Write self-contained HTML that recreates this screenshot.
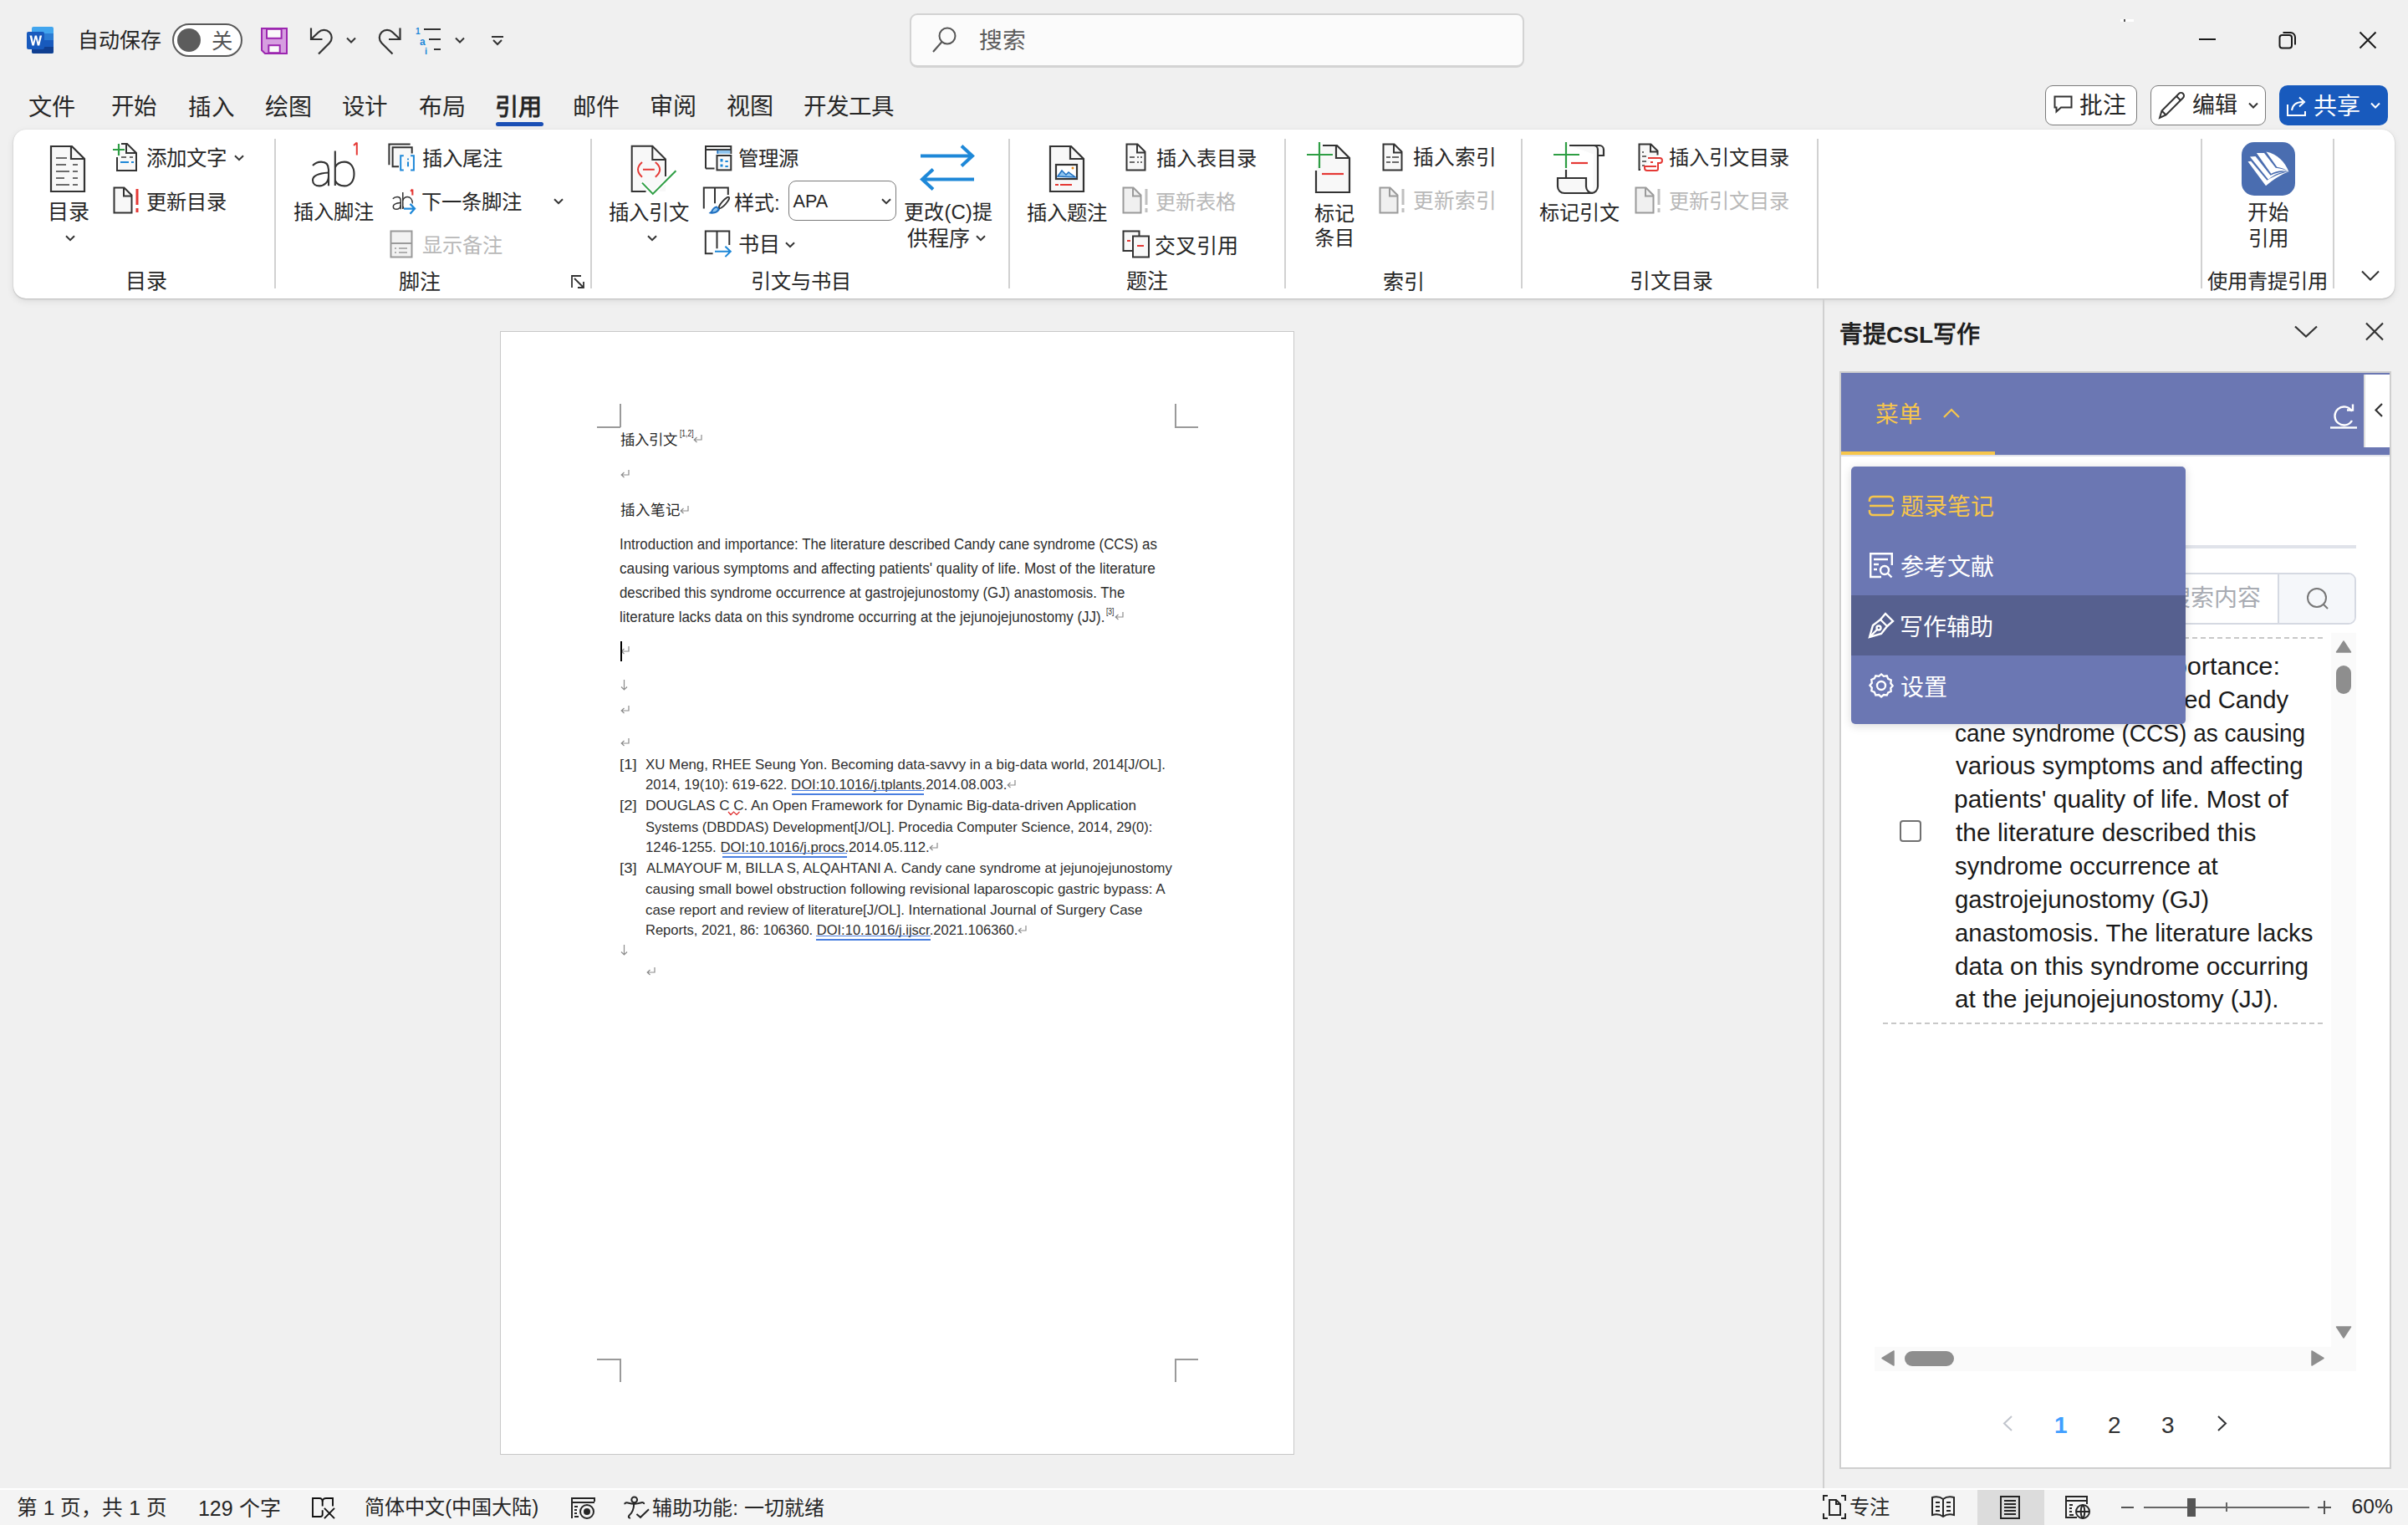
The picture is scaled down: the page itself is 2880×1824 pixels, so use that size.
<!DOCTYPE html>
<html lang="zh-CN"><head><meta charset="utf-8"><style>
*{box-sizing:border-box}
html,body{margin:0;padding:0}
body{width:2880px;height:1824px;position:relative;overflow:hidden;background:#f0f0f0;font-family:"Liberation Sans",sans-serif;color:#262626}
.t{position:absolute;white-space:nowrap;line-height:1}
.a{position:absolute}
svg.a{overflow:visible}
.ribbon{position:absolute;left:16px;top:155px;width:2848px;height:202px;background:#fff;border-radius:15px;box-shadow:0 1px 2px rgba(0,0,0,0.16),0 3px 10px rgba(0,0,0,0.09),0 0 1px rgba(0,0,0,0.12)}
.sep{position:absolute;top:166px;width:2px;height:179px;background:#d1d1d1}
.page{position:absolute;left:598px;top:396px;width:950px;height:1344px;background:#fff;border:1px solid #c8c8c8}
.dl{position:absolute;white-space:nowrap;line-height:1;font-size:18px;color:#2e2e2e;transform-origin:0 0}
.pm{color:#8a8a8a}
.pl{position:absolute;white-space:nowrap;line-height:1;font-size:30px;color:#1a1a1a;transform-origin:0 0}
</style></head><body>
<svg class="a" style="left:32px;top:32px" width="32" height="32" viewBox="0 0 32 32">
<rect x="6" y="0" width="26" height="32" rx="2" fill="#41a5ee"/>
<rect x="6" y="8" width="26" height="8" fill="#2b7cd3"/>
<rect x="6" y="16" width="26" height="8" fill="#185abd"/>
<path d="M6 24h26v6a2 2 0 0 1-2 2H8a2 2 0 0 1-2-2z" fill="#103f91"/>
<rect x="0" y="6" width="21" height="21" rx="2" fill="#185abd"/>
<path d="M3.5 10.5h2.6l1.7 8.2 1.9-8.2h2.3l1.9 8.3 1.7-8.3h2.5l-2.9 12h-2.4l-2-8.4-2 8.4H6.4z" fill="#fff"/>
</svg>
<div class="a" style="left:206px;top:28px;width:84px;height:40px;border:2px solid #5a5a5a;border-radius:20px;background:#fff"></div>
<div class="a" style="left:212px;top:34px;width:28px;height:28px;border-radius:14px;background:#5c5c5c"></div>
<svg class="a" style="left:312px;top:33px" width="32" height="32" viewBox="0 0 32 32">
<path d="M1 1h30v30H5l-4-4z" fill="#d69ee0" stroke="#9c27b0" stroke-width="2"/>
<rect x="7" y="1.8" width="17.6" height="11" fill="#fafafa" stroke="#9c27b0" stroke-width="2"/>
<rect x="9.3" y="21.2" width="13.4" height="9" fill="#fafafa" stroke="#9c27b0" stroke-width="2"/>
</svg>
<svg class="a" style="left:370px;top:32px" width="32" height="34" viewBox="0 0 32 34" fill="none" stroke="#333" stroke-width="2.2">
<path d="M2 1.5v13.5h13.5"/><path d="M2.5 14.5L11 6.5a9 9 0 0 1 13 13L11 32.5"/></svg>
<svg class="a" style="left:414px;top:44px" width="12" height="9" viewBox="0 0 12 9" fill="none" stroke="#333" stroke-width="2"><path d="M1 1.5l5 5 5-5"/></svg>
<svg class="a" style="left:449px;top:32px" width="32" height="34" viewBox="0 0 32 34" fill="none" stroke="#333" stroke-width="2.2">
<path d="M29.5 1.5v13.5H16"/><path d="M29 14.5L20.5 6.5a9 9 0 0 0-13 13L20.5 32.5"/></svg>
<svg class="a" style="left:497px;top:32px" width="32" height="34" viewBox="0 0 32 34">
<text x="0" y="9" font-size="10" font-weight="bold" fill="#1e88d8" font-family="Liberation Sans">1</text>
<text x="5" y="22" font-size="12" font-weight="bold" fill="#1e88d8" font-family="Liberation Sans">a</text>
<text x="11" y="33" font-size="11" font-weight="bold" fill="#1e88d8" font-family="Liberation Sans">i</text>
<path d="M10 3h20M16 15h14M22 27h8" stroke="#333" stroke-width="2.2"/></svg>
<svg class="a" style="left:544px;top:44px" width="12" height="9" viewBox="0 0 12 9" fill="none" stroke="#333" stroke-width="2"><path d="M1 1.5l5 5 5-5"/></svg>
<svg class="a" style="left:587px;top:42px" width="16" height="14" viewBox="0 0 16 14" fill="none" stroke="#333" stroke-width="2"><path d="M1 2h14"/><path d="M3 6l5 5 5-5"/></svg>
<div class="a" style="left:1088px;top:16px;width:735px;height:65px;border:2px solid #d3d3d3;border-bottom-width:3px;border-radius:9px;background:#fbfbfb"></div>
<svg class="a" style="left:1115px;top:32px" width="30" height="32" viewBox="0 0 30 32" fill="none" stroke="#555" stroke-width="2"><circle cx="18" cy="11" r="9.5"/><path d="M11.5 18L1 30"/></svg>
<div class="a" style="left:2536px;top:23px;width:16px;height:3px;background:#fff"></div><div class="a" style="left:2540px;top:23px;width:2px;height:3px;background:#555"></div>
<div class="a" style="left:2630px;top:46px;width:20px;height:2px;background:#1a1a1a"></div>
<svg class="a" style="left:2725px;top:37px" width="22" height="22" viewBox="0 0 22 22" fill="none" stroke="#1a1a1a" stroke-width="2">
<rect x="1.5" y="5" width="14.5" height="15.5" rx="3"/><path d="M5.5 2h9a5.5 5.5 0 0 1 5.5 5.5v9"/></svg>
<svg class="a" style="left:2821px;top:37px" width="22" height="22" viewBox="0 0 22 22" fill="none" stroke="#1a1a1a" stroke-width="2"><path d="M1.5 1.5l19 19M20.5 1.5l-19 19"/></svg>
<div class="a" style="left:593px;top:146px;width:57px;height:5px;border-radius:3px;background:#1a4fb5"></div>
<div class="a" style="left:2446px;top:102px;width:110px;height:48px;border:1.5px solid #7a7a7a;border-radius:9px;background:#fff"></div>
<svg class="a" style="left:2456px;top:114px" width="24" height="24" viewBox="0 0 24 24" fill="none" stroke="#333" stroke-width="2"><path d="M1.5 1.5h20v13H9l-5.5 5v-5h-2z"/></svg>
<div class="a" style="left:2572px;top:102px;width:138px;height:48px;border:1.5px solid #7a7a7a;border-radius:9px;background:#fff"></div>
<svg class="a" style="left:2581px;top:109px" width="34" height="34" viewBox="0 0 34 34" fill="none" stroke="#333" stroke-width="2"><path d="M2 32l2.5-8.5L25 3a3.5 3.5 0 0 1 5 5L9.5 28.5z"/><path d="M22 6l5 5M4.5 23.5l5 5"/></svg>
<svg class="a" style="left:2689px;top:122px" width="12" height="9" viewBox="0 0 12 9" fill="none" stroke="#333" stroke-width="2"><path d="M1 1.5l5 5 5-5"/></svg>
<div class="a" style="left:2726px;top:102px;width:130px;height:48px;border-radius:10px;background:#185abd"></div>
<svg class="a" style="left:2735px;top:113px" width="25" height="26" viewBox="0 0 25 26" fill="none" stroke="#fff" stroke-width="2"><path d="M1 12v13h21v-5"/><path d="M6 19c1-7 6-10 13-10"/><path d="M15 3.5l6 5.5-6 5.5"/></svg>
<svg class="a" style="left:2835px;top:122px" width="12" height="9" viewBox="0 0 12 9" fill="none" stroke="#fff" stroke-width="2"><path d="M1 1.5l5 5 5-5"/></svg>
<div class="ribbon"></div>
<div class="sep" style="left:328px"></div>
<div class="sep" style="left:706px"></div>
<div class="sep" style="left:1206px"></div>
<div class="sep" style="left:1536px"></div>
<div class="sep" style="left:1819px"></div>
<div class="sep" style="left:2173px"></div>
<div class="sep" style="left:2632px"></div>
<div class="sep" style="left:2790px"></div>
<svg class="a" style="left:59px;top:173px" width="44" height="58" viewBox="0 0 44 58" fill="none">
<path d="M2 2h25l15 15v39H2z" fill="#f8f8f8" stroke="#333" stroke-width="2.2"/><path d="M26 2v15h16" stroke="#333" stroke-width="2.2"/>
<path d="M8 16h5M12 16h4M15 16h6M8 24h12M28 24h6M8 32h16M28 32h6M8 40h10M28 40h6M8 48h16M28 48h6" stroke="#6b6b6b" stroke-width="2.2"/></svg>
<svg class="a" style="left:78px;top:281px" width="12" height="8" viewBox="0 0 12 8" fill="none" stroke="#333" stroke-width="2"><path d="M1 1.2l5 5 5-5"/></svg>
<svg class="a" style="left:135px;top:171px" width="30" height="34" viewBox="0 0 30 34" fill="none">
<path d="M10 1h7l11 11v21H5V17" fill="#f8f8f8" stroke="#333" stroke-width="2"/><path d="M16 1v11h12" stroke="#333" stroke-width="2"/>
<path d="M7 1v14M0 8h14" stroke="#2e9e44" stroke-width="2.2"/><path d="M10 17h6M20 17h4" stroke="#6b6b6b" stroke-width="2"/><path d="M9 23h10M22 23h3" stroke="#1e88d8" stroke-width="2"/></svg>
<svg class="a" style="left:280px;top:185px" width="12" height="8" viewBox="0 0 12 8" fill="none" stroke="#333" stroke-width="2"><path d="M1 1.2l5 5 5-5"/></svg>
<svg class="a" style="left:135px;top:223px" width="33" height="34" viewBox="0 0 33 34" fill="none">
<path d="M1.5 1.5h12l9 9V31.5h-21z" fill="#f8f8f8" stroke="#333" stroke-width="2"/><path d="M13 1.5v10h9.5" stroke="#333" stroke-width="2"/>
<path d="M29 3v19M29 26v5" stroke="#e53935" stroke-width="3"/></svg>
<svg class="a" style="left:368px;top:168px" width="64" height="60" viewBox="0 0 64 60" fill="none" stroke="#333" stroke-width="2.1">
<g transform="translate(0,10)"><path d="M6 20C9 16.8 12.5 15.6 16 15.6C22 15.6 25 19 25 25V44.2"/><path d="M25 28.5C17 29 6 30.5 6 37.5C6 42 9.5 44.4 14 44.4C19.5 44.4 25 40 25 33"/>
<path d="M32.8 2.5V44"/><path d="M32.8 22C35 17.5 39 15.6 44 15.6C51 15.6 55.5 21.5 55.5 30C55.5 38.5 51 44.4 44 44.4C39 44.4 35 42.5 32.8 38"/></g>
<path d="M58.8 2.5V17.5M55 6L58.8 2.5" stroke="#e53935" stroke-width="2"/></svg>
<svg class="a" style="left:464px;top:171px" width="34" height="34" viewBox="0 0 34 34" fill="none">
<rect x="5.6" y="5.3" width="23.1" height="23" fill="#f8f8f8"/>
<path d="M1.4 26.3V1.6H26.7" stroke="#333" stroke-width="2"/><path d="M13 28.3H5.6V5.3H28.7V12.6" stroke="#333" stroke-width="2"/>
<path d="M18.8 15.2H15.2V32.5H18.8M27.1 15.2H30.9V32.5H27.1M24 22.6V28.3M24 18.5V20.3" stroke="#1e88d8" stroke-width="2" fill="#fff"/></svg>
<svg class="a" style="left:466px;top:226px" width="34" height="32" viewBox="0 -2 34 34" fill="none" stroke="#333" stroke-width="1.6">
<path d="M3 10.5C4.5 8.7 6.5 8 8.5 8C11.5 8 13 10 13 13V23.7"/><path d="M13 15.5C9 15.8 3.5 16.3 3.5 20.3C3.5 22.5 5.3 23.8 7.5 23.8C10.3 23.8 13 21.7 13 18.3"/>
<path d="M15.7 2.2V23.6"/><path d="M15.7 12.5C16.7 9.5 19 8 21.5 8C25 8 27.8 11 27.8 15.8C27.8 20.5 25 23.8 21.5 23.8C19 23.8 16.7 22.5 15.7 20.5"/>
<path d="M17 23H30.5M25 17L30.8 23L25 29.5" stroke="#fff" stroke-width="5"/>
<path d="M17 23H30.5M25 17L30.8 23L25 29.5" stroke="#1e88d8" stroke-width="2.4"/>
<path d="M28 -1.5V6M25.6 0.8L28 -1.5" stroke="#e53935" stroke-width="2.2"/></svg>
<svg class="a" style="left:662px;top:237px" width="12" height="8" viewBox="0 0 12 8" fill="none" stroke="#333" stroke-width="2"><path d="M1 1.2l5 5 5-5"/></svg>
<svg class="a" style="left:466px;top:275px" width="28" height="34" viewBox="0 0 28 34" fill="none">
<rect x="1.5" y="1.5" width="25" height="31" fill="#f2f2f2" stroke="#9a9a9a" stroke-width="2"/><path d="M1.5 16h25" stroke="#9a9a9a" stroke-width="2"/><path d="M6 22h2M11 22h10M6 27h2M11 27h10" stroke="#9a9a9a" stroke-width="1.6"/></svg>
<svg class="a" style="left:683px;top:329px" width="17" height="17" viewBox="0 0 17 17" fill="none" stroke="#333" stroke-width="1.8"><path d="M1 15V1h11"/><path d="M4 4l11 11M15 8v7H8"/></svg>
<svg class="a" style="left:754px;top:173px" width="58" height="62" viewBox="0 0 58 62" fill="none">
<path d="M1.7 56V1.8H26.3L42 17.5V56H18.5z" fill="#f8f8f8" stroke="none"/>
<path d="M18.5 56H1.7V1.8H26.3L42 17.5V38" stroke="#333" stroke-width="2"/><path d="M26.3 1.8V18H42" stroke="#333" stroke-width="2"/>
<path d="M14 21Q4 29.8 14 38.7M29.8 21Q40.6 29.8 29.8 38.7M15 29.7H28.8" stroke="#e53935" stroke-width="2"/>
<path d="M14 45.6L26.8 58.9L54.4 31.3" stroke="#fff" stroke-width="5"/><path d="M14 45.6L26.8 58.9L54.4 31.3" stroke="#2e9e44" stroke-width="2"/></svg>
<svg class="a" style="left:774px;top:281px" width="12" height="8" viewBox="0 0 12 8" fill="none" stroke="#333" stroke-width="2"><path d="M1 1.2l5 5 5-5"/></svg>
<svg class="a" style="left:843px;top:174px" width="33" height="31" viewBox="0 0 33 31" fill="none">
<path d="M1 27.5V1H31.3V10" stroke="#333" stroke-width="2"/><path d="M1 5H31.3M1 27.5H11.5" stroke="#333" stroke-width="2"/>
<rect x="14.5" y="5.8" width="15.8" height="4" fill="#8ec4ef"/><rect x="14.5" y="5.8" width="1.6" height="4" fill="#1e6fc0"/>
<rect x="14.5" y="12" width="16.8" height="17.4" fill="#fafafa" stroke="#333" stroke-width="2"/>
<rect x="18.5" y="16" width="3" height="3.5" fill="#1e88d8"/><rect x="18.5" y="22.5" width="3" height="3" fill="#1e88d8"/>
<path d="M24.4 19H27.8M24.4 25H27.8" stroke="#1e88d8" stroke-width="2"/></svg>
<svg class="a" style="left:840px;top:222px" width="36" height="36" viewBox="0 0 36 36" fill="none">
<path d="M1.8 27.6V2.5H15V21.2M15 2.5H30.8V10.9" stroke="#333" stroke-width="2"/>
<ellipse cx="26" cy="20.5" rx="8.8" ry="2.4" transform="rotate(-48 26 20.5)" fill="#fff" stroke="#333" stroke-width="1.8"/>
<path d="M7.5 33C12 34.5 18.5 33.5 21 28.5L17.5 24.5C13.5 25 11.5 28 10.5 30.5Z" fill="#1e6fc0"/><path d="M12 31.5C15 31.5 17.5 30.5 18.5 28L16.8 26.5C14.5 27 13 29 12 31.5Z" fill="#8ec4ef"/></svg>
<div class="a" style="left:943px;top:216px;width:129px;height:48px;border:1.5px solid #7a7a7a;border-radius:9px;background:#fff"></div>
<svg class="a" style="left:1054px;top:237px" width="12" height="8" viewBox="0 0 12 8" fill="none" stroke="#333" stroke-width="2"><path d="M1 1.2l5 5 5-5"/></svg>
<svg class="a" style="left:842px;top:275px" width="34" height="34" viewBox="0 0 34 34" fill="none">
<path d="M10.6 28.2H1.8V1.6H30.3V17.9M15.5 1.6V22.3" stroke="#333" stroke-width="2"/>
<path d="M13 25.7H32M25.4 19.8L31.8 25.7L25.4 32.1" stroke="#1e88d8" stroke-width="2"/></svg>
<svg class="a" style="left:939px;top:289px" width="12" height="8" viewBox="0 0 12 8" fill="none" stroke="#333" stroke-width="2"><path d="M1 1.2l5 5 5-5"/></svg>
<svg class="a" style="left:1101px;top:173px" width="66" height="58" viewBox="0 0 66 58" fill="none" stroke="#1e88d8" stroke-width="4">
<path d="M0 13.5h62M49 1.5l13 12-13 12"/><path d="M64 41.5H2M15 29.5l-13 12 13 12"/></svg>
<svg class="a" style="left:1167px;top:281px" width="12" height="8" viewBox="0 0 12 8" fill="none" stroke="#333" stroke-width="2"><path d="M1 1.2l5 5 5-5"/></svg>
<svg class="a" style="left:1254px;top:173px" width="44" height="58" viewBox="0 0 44 58" fill="none">
<path d="M2 2h25l15 15v39H2z" fill="#f8f8f8" stroke="#333" stroke-width="2.2"/><path d="M26 2v15h16" stroke="#333" stroke-width="2.2"/>
<rect x="9" y="24" width="25" height="17" fill="#fff" stroke="#333" stroke-width="2.2"/><path d="M11 38l5-7 5 5 3-3 8 6z" fill="#8ec4ef" stroke="#1e6fc0" stroke-width="1.5"/><circle cx="29" cy="28" r="1.5" fill="#e8891a"/>
<path d="M8 48h4M14 48h14" stroke="#e53935" stroke-width="2.2"/></svg>
<svg class="a" style="left:1346px;top:171px" width="26" height="34" viewBox="0 0 26 34" fill="none">
<path d="M1.5 1.5h13l9 9V32.5h-22z" fill="#f8f8f8" stroke="#333" stroke-width="2"/><path d="M14 1.5v10h9.5" stroke="#333" stroke-width="2"/>
<path d="M5 17h6M14 17h2M18 17h2M5 23h6M14 23h2M18 23h2" stroke="#6b6b6b" stroke-width="2"/></svg>
<svg class="a" style="left:1342px;top:223px" width="33" height="34" viewBox="0 0 33 34" fill="none">
<path d="M1.5 1.5h12l9 9V31.5h-21z" fill="#f0f0f0" stroke="#9a9a9a" stroke-width="2"/><path d="M13 1.5v10h9.5" stroke="#9a9a9a" stroke-width="2"/>
<path d="M29 3v19M29 26v5" stroke="#c0c0c0" stroke-width="3"/></svg>
<svg class="a" style="left:1342px;top:275px" width="34" height="34" viewBox="0 0 34 34" fill="none">
<path d="M12 25H1.5V1.5h19v6" stroke="#333" stroke-width="2" fill="#f8f8f8"/><rect x="13" y="7.5" width="19" height="25" fill="#f8f8f8" stroke="#333" stroke-width="2"/>
<path d="M6 13h4" stroke="#e53935" stroke-width="2"/><path d="M18 19h8" stroke="#e53935" stroke-width="2"/></svg>
<svg class="a" style="left:1563px;top:169px" width="54" height="62" viewBox="0 0 54 62" fill="none">
<path d="M19 5h17l15 15v41H11V35" fill="#f8f8f8" stroke="#333" stroke-width="2.2"/><path d="M35 5v15h16" stroke="#333" stroke-width="2.2"/>
<path d="M15 1v31M0 16h31" stroke="#2e9e44" stroke-width="2.2"/><path d="M18 39h26" stroke="#e53935" stroke-width="2.2"/></svg>
<svg class="a" style="left:1653px;top:171px" width="26" height="34" viewBox="0 0 26 34" fill="none">
<path d="M1.5 1.5h13l9 9V32.5h-22z" fill="#f8f8f8" stroke="#333" stroke-width="2"/><path d="M14 1.5v10h9.5" stroke="#333" stroke-width="2"/>
<path d="M5 17h5M12 17h8M5 23h5M12 23h8" stroke="#6b6b6b" stroke-width="2"/></svg>
<svg class="a" style="left:1649px;top:223px" width="33" height="34" viewBox="0 0 33 34" fill="none">
<path d="M1.5 1.5h12l9 9V31.5h-21z" fill="#f0f0f0" stroke="#9a9a9a" stroke-width="2"/><path d="M13 1.5v10h9.5" stroke="#9a9a9a" stroke-width="2"/>
<path d="M29 3v19M29 26v5" stroke="#c0c0c0" stroke-width="3"/></svg>
<svg class="a" style="left:1857px;top:169px" width="60" height="62" viewBox="0 0 60 62" fill="none">
<path d="M20 5h36a5 5 0 0 1 5 5v7h-8M49 5a5 5 0 0 1 5 5v44a8 8 0 0 1-8 8H14a8 8 0 0 1-8-8v-10h34v10a8 8 0 0 0 8 8" fill="#f8f8f8" stroke="#333" stroke-width="2.2"/>
<path d="M16 34v10" stroke="#333" stroke-width="2.2"/>
<path d="M16 1v31M1 16h31" stroke="#2e9e44" stroke-width="2.2"/><path d="M22 26h20" stroke="#e53935" stroke-width="2.2"/></svg>
<svg class="a" style="left:1959px;top:171px" width="30" height="34" viewBox="0 0 30 34" fill="none">
<path d="M3 32H1.5V1.5h14l8 8v5" fill="#f8f8f8" stroke="#333" stroke-width="2"/><path d="M15 1.5v9h8.5" stroke="#333" stroke-width="2"/>
<path d="M5 11h2M5 16h5M5 22h5M5 27h3" stroke="#6b6b6b" stroke-width="2"/>
<path d="M12 18h14a3 3 0 0 1 0 6h-2v7a2 2 0 0 1-2 2H11a3 3 0 0 1-3-3v-2h14" fill="#fff" stroke="#e53935" stroke-width="2"/><path d="M15 23h3" stroke="#e53935" stroke-width="2"/></svg>
<svg class="a" style="left:1955px;top:223px" width="33" height="34" viewBox="0 0 33 34" fill="none">
<path d="M1.5 1.5h12l9 9V31.5h-21z" fill="#f0f0f0" stroke="#9a9a9a" stroke-width="2"/><path d="M13 1.5v10h9.5" stroke="#9a9a9a" stroke-width="2"/>
<path d="M29 3v19M29 26v5" stroke="#c0c0c0" stroke-width="3"/></svg>
<svg class="a" style="left:2681px;top:170px" width="64" height="64" viewBox="0 0 64 64">
<rect x="0" y="0" width="64" height="64" rx="15" fill="#4a6db0"/>
<g fill="#fff">
<path d="M7.5 23.2L11.2 22.8L30.4 45.8C40 40 50 36 56.5 35.6C48 38 38 45 29 52.2Z"/>
<path d="M10 17.4L16.6 16.9L34.5 39.8C42 36 50 35 56.5 35.6C47 35.5 39 38.5 32 44.8Z"/>
<path d="M17.9 13L27 13L40.7 30.8C47 31.5 53 33 56.5 35.6C49 33 42 34 35.3 37.8Z"/>
<path d="M29.4 11.5C43 14 52 24 56.5 35.6C52 32 47 30.5 42.3 29.8Z"/>
</g></svg>
<svg class="a" style="left:2824px;top:323px" width="22" height="13" viewBox="0 0 22 13" fill="none" stroke="#333" stroke-width="2"><path d="M1 1.5l10 10 10-10"/></svg>
<div class="a" style="left:2180px;top:358px;width:1.5px;height:1422px;background:#d0d0d0"></div>
<div class="page"></div>
<div class="a" style="left:741px;top:483px;width:1.5px;height:28px;background:#9a9a9a"></div>
<div class="a" style="left:714px;top:510px;width:28px;height:1.5px;background:#9a9a9a"></div>
<div class="a" style="left:1405px;top:483px;width:1.5px;height:28px;background:#9a9a9a"></div>
<div class="a" style="left:1405px;top:510px;width:28px;height:1.5px;background:#9a9a9a"></div>
<div class="a" style="left:741px;top:1625px;width:1.5px;height:28px;background:#9a9a9a"></div>
<div class="a" style="left:714px;top:1625px;width:28px;height:1.5px;background:#9a9a9a"></div>
<div class="a" style="left:1405px;top:1625px;width:1.5px;height:28px;background:#9a9a9a"></div>
<div class="a" style="left:1405px;top:1625px;width:28px;height:1.5px;background:#9a9a9a"></div>
<svg class="a" style="left:2744px;top:389px" width="28" height="15" viewBox="0 0 28 15" fill="none" stroke="#333" stroke-width="2.2"><path d="M1 1.5l13 12 13-12"/></svg>
<svg class="a" style="left:2829px;top:386px" width="22" height="21" viewBox="0 0 22 21" fill="none" stroke="#333" stroke-width="2.2"><path d="M1 0.5l20 20M21 0.5l-20 20"/></svg>
<div class="a" style="left:2200px;top:444px;width:660px;height:1313px;border:2px solid #cfcfcf;background:#fff"></div>
<div class="a" style="left:2202px;top:446px;width:656px;height:98px;background:#6b77b3"></div>
<div class="a" style="left:2202px;top:544px;width:656px;height:2px;background:#dfe1ea"></div>
<div class="a" style="left:2202px;top:540px;width:184px;height:4px;background:#f7c64b"></div>
<svg class="a" style="left:2324px;top:487px" width="20" height="13" viewBox="0 0 20 13" fill="none" stroke="#f7c64b" stroke-width="2.2"><path d="M1 12l9-9 9 9"/></svg>
<svg class="a" style="left:2786px;top:482px" width="34" height="32" viewBox="0 0 34 32" fill="none" stroke="#fff" stroke-width="2.4"><path d="M27 10a11 11 0 1 0 0 11"/><path d="M21 8.5h7v-7"/><path d="M1 29.5h32"/></svg>
<div class="a" style="left:2827px;top:448px;width:31px;height:87px;background:#fff;border-left:2px solid #ddd"></div>
<svg class="a" style="left:2840px;top:482px" width="10" height="17" viewBox="0 0 10 17" fill="none" stroke="#333" stroke-width="2.2"><path d="M9 1L1.5 8.5 9 16"/></svg>
<div class="a" style="left:2252px;top:652px;width:566px;height:4px;background:#e0e3ea"></div>
<div class="a" style="left:2252px;top:685px;width:566px;height:62px;border:2px solid #d5d9e2;border-radius:9px;background:#fff"></div>
<div class="a" style="left:2724px;top:687px;width:92px;height:58px;background:#f5f7fa;border-left:2px solid #d5d9e2;border-radius:0 7px 7px 0"></div>
<svg class="a" style="left:2758px;top:703px" width="28" height="28" viewBox="0 0 28 28" fill="none" stroke="#777" stroke-width="2"><circle cx="13" cy="12" r="11"/><path d="M21 20l5 5"/></svg>
<div class="t" style="left:2592px;top:702px;font-size:28px;color:#a8abb2">搜索内容</div>
<div class="a" style="left:2252px;top:762px;width:526px;height:0;border-top:2px dashed #c8c8c8"></div>
<div class="a" style="left:2252px;top:1223px;width:526px;height:0;border-top:2px dashed #c8c8c8"></div>
<div class="a" style="left:2788px;top:757px;width:30px;height:854px;background:#fafafa"></div>
<svg class="a" style="left:2794px;top:766px" width="18" height="15" viewBox="0 0 18 15"><path d="M9 1L17.5 14H0.5z" fill="#8e8e8e" stroke="#8e8e8e" stroke-linejoin="round" stroke-width="1.5"/></svg>
<div class="a" style="left:2794px;top:796px;width:18px;height:34px;border-radius:9px;background:#8e8e8e"></div>
<svg class="a" style="left:2794px;top:1586px" width="18" height="15" viewBox="0 0 18 15"><path d="M9 14L17.5 1H0.5z" fill="#8e8e8e" stroke="#8e8e8e" stroke-linejoin="round" stroke-width="1.5"/></svg>
<div class="a" style="left:2242px;top:1611px;width:576px;height:29px;background:#fafafa"></div>
<svg class="a" style="left:2250px;top:1615px" width="16" height="19" viewBox="0 0 16 19"><path d="M1 9.5L15 1V18z" fill="#8e8e8e" stroke="#8e8e8e" stroke-linejoin="round" stroke-width="1.5"/></svg>
<div class="a" style="left:2278px;top:1616px;width:59px;height:18px;border-radius:9px;background:#8e8e8e"></div>
<svg class="a" style="left:2764px;top:1615px" width="16" height="19" viewBox="0 0 16 19"><path d="M15 9.5L1 1V18z" fill="#8e8e8e" stroke="#8e8e8e" stroke-linejoin="round" stroke-width="1.5"/></svg>
<div class="a" style="left:2272px;top:981px;width:26px;height:26px;border:2px solid #707070;border-radius:4px;background:#fff"></div>
<svg class="a" style="left:2395px;top:1693px" width="12" height="19" viewBox="0 0 12 19" fill="none" stroke="#c0c4cc" stroke-width="2"><path d="M11 1L2 9.5 11 18"/></svg>
<svg class="a" style="left:2652px;top:1693px" width="12" height="19" viewBox="0 0 12 19" fill="none" stroke="#303133" stroke-width="2"><path d="M1 1l9 8.5L1 18"/></svg>
<div class="t" style="left:2457px;top:1691px;font-size:28px;font-weight:bold;color:#409eff">1</div>
<div class="t" style="left:2521px;top:1691px;font-size:28px;color:#303133">2</div>
<div class="t" style="left:2585px;top:1691px;font-size:28px;color:#303133">3</div>
<div class="a" style="left:0;top:1780px;width:2880px;height:44px;background:#f4f4f4;border-top:2px solid #ffffff"></div>
<div class="t" id="autosave" style="left:93.00px;top:36.00px;font-size:25.00px;color:#262626">自动保存</div>
<div class="t" id="toggle_off" style="left:253.33px;top:36.72px;font-size:25.35px;color:#555555">关</div>
<div class="t" id="search_txt" style="left:1170.71px;top:34.75px;font-size:27.79px;color:#5c5c5c">搜索</div>
<div class="t" id="tab0" style="left:34.06px;top:113.65px;font-size:28.24px;color:#262626">文件</div>
<div class="t" id="tab1" style="left:133.00px;top:114.00px;font-size:27.50px;color:#262626">开始</div>
<div class="t" id="tab2" style="left:225.00px;top:114.98px;font-size:27.52px;color:#262626">插入</div>
<div class="t" id="tab3" style="left:316.98px;top:115.25px;font-size:28.05px;color:#262626">绘图</div>
<div class="t" id="tab4" style="left:409.00px;top:114.00px;font-size:27.50px;color:#262626">设计</div>
<div class="t" id="tab5" style="left:500.98px;top:114.72px;font-size:28.05px;color:#262626">布局</div>
<div class="t" id="tab6" style="left:591.96px;top:115.25px;font-size:28.06px;color:#262626;font-weight:bold">引用</div>
<div class="t" id="tab7" style="left:684.96px;top:114.72px;font-size:28.05px;color:#262626">邮件</div>
<div class="t" id="tab8" style="left:776.96px;top:114.23px;font-size:28.06px;color:#262626">审阅</div>
<div class="t" id="tab9" style="left:868.96px;top:114.22px;font-size:28.06px;color:#262626">视图</div>
<div class="t" id="tab10" style="left:960.80px;top:114.00px;font-size:27.50px;color:#262626">开发工具</div>
<div class="t" id="btn_pz" style="left:2486.52px;top:112.72px;font-size:27.88px;color:#262626">批注</div>
<div class="t" id="btn_bj" style="left:2621.90px;top:113.10px;font-size:27.00px;color:#262626">编辑</div>
<div class="t" id="btn_gx" style="left:2766.96px;top:113.62px;font-size:28.04px;color:#ffffff">共享</div>
<div class="t" id="r_mulu" style="left:57.10px;top:241.20px;font-size:25.00px;color:#262626">目录</div>
<div class="t" id="r_tjwz" style="left:175.36px;top:178.04px;font-size:24.46px;color:#262626">添加文字</div>
<div class="t" id="r_gxml" style="left:175.37px;top:229.68px;font-size:24.21px;color:#262626">更新目录</div>
<div class="t" id="g_mulu" style="left:150.30px;top:323.80px;font-size:25.00px;color:#262626">目录</div>
<div class="t" id="r_crjz" style="left:351.04px;top:242.05px;font-size:24.23px;color:#262626">插入脚注</div>
<div class="t" id="r_crwz" style="left:504.63px;top:177.59px;font-size:24.34px;color:#262626">插入尾注</div>
<div class="t" id="r_xytjz" style="left:504.23px;top:230.01px;font-size:24.35px;color:#262626">下一条脚注</div>
<div class="t" id="r_xsbz" style="left:504.59px;top:281.80px;font-size:24.16px;color:#b8b8b8">显示备注</div>
<div class="t" id="g_jz" style="left:476.80px;top:325.00px;font-size:25.00px;color:#262626">脚注</div>
<div class="t" id="r_cryw" style="left:728.22px;top:242.76px;font-size:24.44px;color:#262626">插入引文</div>
<div class="t" id="r_gly" style="left:882.98px;top:177.59px;font-size:24.42px;color:#262626">管理源</div>
<div class="t" id="r_ys" style="left:878.04px;top:230.88px;font-size:24.10px;color:#262626">样式:</div>
<div class="t" id="r_apa" style="left:948.52px;top:230.05px;font-size:21.64px;color:#262626">APA</div>
<div class="t" id="r_sm" style="left:882.50px;top:280.40px;font-size:25.00px;color:#262626">书目</div>
<div class="t" id="r_ggc1" style="left:1081.39px;top:241.68px;font-size:24.05px;color:#262626">更改(C)提</div>
<div class="t" id="r_ggc2" style="left:1085.00px;top:273.30px;font-size:25.00px;color:#262626">供程序</div>
<div class="t" id="g_ywysm" style="left:897.52px;top:324.89px;font-size:24.22px;color:#262626">引文与书目</div>
<div class="t" id="r_crtz" style="left:1227.78px;top:243.10px;font-size:24.36px;color:#262626">插入题注</div>
<div class="t" id="r_crbml" style="left:1382.69px;top:177.97px;font-size:24.21px;color:#262626">插入表目录</div>
<div class="t" id="r_gxbg" style="left:1382.34px;top:230.11px;font-size:24.29px;color:#b8b8b8">更新表格</div>
<div class="t" id="r_jcyy" style="left:1381.40px;top:281.80px;font-size:25.00px;color:#262626">交叉引用</div>
<div class="t" id="g_tz" style="left:1346.60px;top:324.20px;font-size:25.00px;color:#262626">题注</div>
<div class="t" id="r_bj1" style="left:1571.52px;top:243.54px;font-size:24.19px;color:#262626">标记</div>
<div class="t" id="r_bj2" style="left:1571.58px;top:272.85px;font-size:24.28px;color:#262626">条目</div>
<div class="t" id="r_crsy" style="left:1689.51px;top:177.13px;font-size:24.70px;color:#262626">插入索引</div>
<div class="t" id="r_gxsy" style="left:1689.51px;top:229.08px;font-size:24.70px;color:#b8b8b8">更新索引</div>
<div class="t" id="g_sy" style="left:1653.80px;top:325.00px;font-size:25.00px;color:#262626">索引</div>
<div class="t" id="r_bjyw" style="left:1841.30px;top:242.78px;font-size:24.11px;color:#262626">标记引文</div>
<div class="t" id="r_crywml" style="left:1996.12px;top:177.45px;font-size:24.22px;color:#262626">插入引文目录</div>
<div class="t" id="r_gxywml" style="left:1996.12px;top:229.37px;font-size:24.22px;color:#b8b8b8">更新引文目录</div>
<div class="t" id="g_ywml" style="left:1948.50px;top:324.63px;font-size:24.75px;color:#262626">引文目录</div>
<div class="t" id="r_ks" style="left:2688.00px;top:242.59px;font-size:24.59px;color:#262626">开始</div>
<div class="t" id="r_yy" style="left:2689.04px;top:274.36px;font-size:24.44px;color:#262626">引用</div>
<div class="t" id="g_syqtyy" style="left:2639.67px;top:324.60px;font-size:24.33px;color:#262626">使用青提引用</div>
<div class="t" id="d_cryw" style="left:742.06px;top:518.09px;font-size:17.35px;color:#262626">插入引文</div>
<div class="t" id="d_crbj" style="left:741.53px;top:601.67px;font-size:17.55px;color:#262626">插入笔记</div>
<div class="t" id="p_title" style="left:2200.00px;top:386.60px;font-size:28.00px;color:#1f1f1f;font-weight:bold">青提CSL写作</div>
<div class="t" id="p_menu" style="left:2242.92px;top:481.70px;font-size:27.68px;color:#f7c64b">菜单</div>
<div class="t" id="s1" style="left:20.03px;top:1792.20px;font-size:24.58px;color:#262626">第 1 页，共 1 页</div>
<div class="t" id="s2" style="left:236.90px;top:1792.00px;font-size:25.00px;color:#262626">129 个字</div>
<div class="t" id="s3" style="left:436.15px;top:1790.93px;font-size:24.11px;color:#262626">简体中文(中国大陆)</div>
<div class="t" id="s4" style="left:780.26px;top:1791.75px;font-size:24.03px;color:#262626">辅助功能: 一切就绪</div>
<div class="t" id="s5" style="left:2212.42px;top:1790.84px;font-size:24.27px;color:#262626">专注</div>
<div class="t" id="s6" style="left:2812.56px;top:1790.28px;font-size:24.65px;color:#262626">60%</div>
<div class="dl" id="p1" style="left:741.10px;top:641.90px;font-size:18px;transform:scaleX(0.9371)">Introduction and importance: The literature described Candy cane syndrome (CCS) as</div>
<div class="dl" id="p2" style="left:741.03px;top:670.50px;font-size:18px;transform:scaleX(0.9558)">causing various symptoms and affecting patients&#x27; quality of life. Most of the literature</div>
<div class="dl" id="p3" style="left:741.04px;top:699.60px;font-size:18px;transform:scaleX(0.9340)">described this syndrome occurrence at gastrojejunostomy (GJ) anastomosis. The</div>
<div class="dl" id="p4" style="left:741.09px;top:728.70px;font-size:18px;transform:scaleX(0.9418)">literature lacks data on this syndrome occurring at the jejunojejunostomy (JJ).</div>
<div class="dl" id="r11" style="left:772.01px;top:905.55px;font-size:17px;transform:scaleX(0.9912)">XU Meng, RHEE Seung Yon. Becoming data-savvy in a big-data world, 2014[J/OL].</div>
<div class="dl" id="r12" style="left:772.02px;top:930.35px;font-size:17px;transform:scaleX(0.9798)">2014, 19(10): 619-622. DOI:10.1016/j.tplants.2014.08.003.</div>
<div class="dl" id="r21" style="left:772.00px;top:955.35px;font-size:17px;transform:scaleX(1.0037)">DOUGLAS C C. An Open Framework for Dynamic Big-data-driven Application</div>
<div class="dl" id="r22" style="left:772.03px;top:980.55px;font-size:17px;transform:scaleX(0.9707)">Systems (DBDDAS) Development[J/OL]. Procedia Computer Science, 2014, 29(0):</div>
<div class="dl" id="r23" style="left:772.01px;top:1005.15px;font-size:17px;transform:scaleX(0.9854)">1246-1255. DOI:10.1016/j.procs.2014.05.112.</div>
<div class="dl" id="r31" style="left:773.00px;top:1030.25px;font-size:17px;transform:scaleX(0.9825)">ALMAYOUF M, BILLA S, ALQAHTANI A. Candy cane syndrome at jejunojejunostomy</div>
<div class="dl" id="r32" style="left:772.00px;top:1054.85px;font-size:17px;transform:scaleX(1.0012)">causing small bowel obstruction following revisional laparoscopic gastric bypass: A</div>
<div class="dl" id="r33" style="left:772.01px;top:1079.85px;font-size:17px;transform:scaleX(0.9937)">case report and review of literature[J/OL]. International Journal of Surgery Case</div>
<div class="dl" id="r34" style="left:772.03px;top:1104.25px;font-size:17px;transform:scaleX(0.9715)">Reports, 2021, 86: 106360. DOI:10.1016/j.ijscr.2021.106360.</div>
<div class="dl" id="l1" style="left:741.35px;top:905.55px;font-size:17px;transform:scaleX(1.0896)">[1]</div>
<div class="dl" id="l2" style="left:741.35px;top:955.35px;font-size:17px;transform:scaleX(1.0896)">[2]</div>
<div class="dl" id="l3" style="left:741.35px;top:1030.25px;font-size:17px;transform:scaleX(1.0896)">[3]</div>
<div class="t" style="left:812.5px;top:514px;font-size:10px;color:#1e1e1e;transform:scaleX(0.85);transform-origin:0 0">[1,2]</div>
<div class="t" style="left:1323px;top:727px;font-size:10px;color:#1e1e1e;transform:scaleX(0.85);transform-origin:0 0">[3]</div>
<svg class="a pm" style="left:829.0px;top:520.0px" width="11" height="10" viewBox="0 0 11 10" fill="none" stroke="#8c8c8c" stroke-width="1.2"><path d="M10 0v6H1.5M4.5 3L1.2 6l3.3 3"/></svg>
<svg class="a pm" style="left:742.2px;top:562.0px" width="11" height="10" viewBox="0 0 11 10" fill="none" stroke="#8c8c8c" stroke-width="1.2"><path d="M10 0v6H1.5M4.5 3L1.2 6l3.3 3"/></svg>
<svg class="a pm" style="left:812.5px;top:605.0px" width="11" height="10" viewBox="0 0 11 10" fill="none" stroke="#8c8c8c" stroke-width="1.2"><path d="M10 0v6H1.5M4.5 3L1.2 6l3.3 3"/></svg>
<svg class="a pm" style="left:1332.6px;top:732.0px" width="11" height="10" viewBox="0 0 11 10" fill="none" stroke="#8c8c8c" stroke-width="1.2"><path d="M10 0v6H1.5M4.5 3L1.2 6l3.3 3"/></svg>
<svg class="a pm" style="left:742.3px;top:773.0px" width="11" height="10" viewBox="0 0 11 10" fill="none" stroke="#8c8c8c" stroke-width="1.2"><path d="M10 0v6H1.5M4.5 3L1.2 6l3.3 3"/></svg>
<svg class="a pm" style="left:742.0px;top:844.0px" width="11" height="10" viewBox="0 0 11 10" fill="none" stroke="#8c8c8c" stroke-width="1.2"><path d="M10 0v6H1.5M4.5 3L1.2 6l3.3 3"/></svg>
<svg class="a pm" style="left:742.0px;top:883.0px" width="11" height="10" viewBox="0 0 11 10" fill="none" stroke="#8c8c8c" stroke-width="1.2"><path d="M10 0v6H1.5M4.5 3L1.2 6l3.3 3"/></svg>
<svg class="a pm" style="left:1203.5px;top:933.0px" width="11" height="10" viewBox="0 0 11 10" fill="none" stroke="#8c8c8c" stroke-width="1.2"><path d="M10 0v6H1.5M4.5 3L1.2 6l3.3 3"/></svg>
<svg class="a pm" style="left:1111.0px;top:1008.0px" width="11" height="10" viewBox="0 0 11 10" fill="none" stroke="#8c8c8c" stroke-width="1.2"><path d="M10 0v6H1.5M4.5 3L1.2 6l3.3 3"/></svg>
<svg class="a pm" style="left:1217.0px;top:1107.0px" width="11" height="10" viewBox="0 0 11 10" fill="none" stroke="#8c8c8c" stroke-width="1.2"><path d="M10 0v6H1.5M4.5 3L1.2 6l3.3 3"/></svg>
<svg class="a pm" style="left:773.4px;top:1157.0px" width="11" height="10" viewBox="0 0 11 10" fill="none" stroke="#8c8c8c" stroke-width="1.2"><path d="M10 0v6H1.5M4.5 3L1.2 6l3.3 3"/></svg>
<svg class="a pm" style="left:742.0px;top:813.0px" width="9" height="13" viewBox="0 0 9 13" fill="none" stroke="#8c8c8c" stroke-width="1.2"><path d="M4.5 0v12M1 8.5l3.5 3.5L8 8.5"/></svg>
<svg class="a pm" style="left:742.0px;top:1130.0px" width="9" height="13" viewBox="0 0 9 13" fill="none" stroke="#8c8c8c" stroke-width="1.2"><path d="M4.5 0v12M1 8.5l3.5 3.5L8 8.5"/></svg>
<div class="a" style="left:742px;top:767px;width:2px;height:24px;background:#000"></div>
<div class="a" style="left:947px;top:945px;width:158px;height:1px;background:#4a7fe0"></div>
<div class="a" style="left:947px;top:949px;width:158px;height:1.5px;background:#4a7fe0"></div>
<div class="a" style="left:864px;top:1020px;width:149px;height:1px;background:#4a7fe0"></div>
<div class="a" style="left:864px;top:1024px;width:149px;height:1.5px;background:#4a7fe0"></div>
<div class="a" style="left:976px;top:1119px;width:137px;height:1px;background:#4a7fe0"></div>
<div class="a" style="left:976px;top:1123px;width:137px;height:1.5px;background:#4a7fe0"></div>
<svg class="a" style="left:871px;top:970px" width="14" height="6" viewBox="0 0 14 6" fill="none" stroke="#e03030" stroke-width="1.2"><path d="M0 1l3 3.5 3.5-3.5 3.5 3.5 3.5-3.5"/></svg>
<div class="pl" id="q1" style="left:2336.94px;top:781.70px;transform:scaleX(1.0255)">Introduction and importance:</div>
<div class="pl" id="q2" style="left:2338.01px;top:821.60px;transform:scaleX(0.9729)">The literature described Candy</div>
<div class="pl" id="q3" style="left:2338.10px;top:862.00px;transform:scaleX(0.9346)">cane syndrome (CCS) as causing</div>
<div class="pl" id="q4" style="left:2339.01px;top:901.30px;transform:scaleX(0.9864)">various symptoms and affecting</div>
<div class="pl" id="q5" style="left:2337.01px;top:941.30px;transform:scaleX(0.9974)">patients&#x27; quality of life. Most of</div>
<div class="pl" id="q6" style="left:2339.00px;top:981.00px;transform:scaleX(0.9977)">the literature described this</div>
<div class="pl" id="q7" style="left:2338.01px;top:1021.00px;transform:scaleX(0.9778)">syndrome occurrence at</div>
<div class="pl" id="q8" style="left:2338.03px;top:1061.00px;transform:scaleX(0.9807)">gastrojejunostomy (GJ)</div>
<div class="pl" id="q9" style="left:2338.03px;top:1100.60px;transform:scaleX(0.9782)">anastomosis. The literature lacks</div>
<div class="pl" id="q10" style="left:2338.01px;top:1140.60px;transform:scaleX(0.9910)">data on this syndrome occurring</div>
<div class="pl" id="q11" style="left:2338.01px;top:1180.00px;transform:scaleX(0.9935)">at the jejunojejunostomy (JJ).</div>
<div class="a" style="left:2214px;top:558px;width:400px;height:308px;background:#6b77b3;border-radius:5px;box-shadow:0 2px 12px rgba(0,0,0,0.15)"></div>
<div class="a" style="left:2214px;top:712px;width:400px;height:72px;background:#56608f"></div>
<div class="t" id="m1" style="left:2273.00px;top:593.00px;font-size:28.00px;color:#f7c64b;font-weight:500">题录笔记</div>
<div class="t" id="m2" style="left:2273.00px;top:665.20px;font-size:28.00px;color:#ffffff;font-weight:500">参考文献</div>
<div class="t" id="m3" style="left:2271.98px;top:736.71px;font-size:28.02px;color:#ffffff;font-weight:500">写作辅助</div>
<div class="t" id="m4" style="left:2272.80px;top:808.60px;font-size:28.00px;color:#ffffff;font-weight:500">设置</div>
<svg class="a" style="left:2235px;top:592px" width="30" height="26" viewBox="0 0 30 26" fill="none" stroke="#f7c64b" stroke-width="2.6">
<path d="M5 2h20M5 24h20M1 13h28M5 2a4 4 0 0 0-4 4M25 2a4 4 0 0 1 4 4M5 24a4 4 0 0 1-4-4M25 24a4 4 0 0 0 4-4"/><path d="M1 6v2M29 6v2M1 18v2M29 18v2"/></svg>
<svg class="a" style="left:2236px;top:661px" width="29" height="31" viewBox="0 0 29 31" fill="none" stroke="#fff" stroke-width="2.4">
<path d="M14 29H1.2V1.2h25.6V15"/><path d="M5 8h17M5 14h6M5 20h4"/><circle cx="18" cy="21" r="5"/><path d="M21.5 24.5l5 5"/></svg>
<svg class="a" style="left:2234px;top:732px" width="32" height="32" viewBox="0 0 32 32" fill="none" stroke="#fff" stroke-width="2.4">
<path d="M2 30l4-14 9-7 8 8-7 9z"/><path d="M15 9l6-7 9 9-7 6"/><circle cx="13" cy="19" r="2.5"/><path d="M2 30l9-9"/></svg>
<svg class="a" style="left:2236px;top:806px" width="28" height="28" viewBox="0 0 28 28" fill="none" stroke="#fff" stroke-width="2.4">
<path d="M14 1.5l3 2.5 4-.5 1.5 3.7 3.7 1.6-.5 4 2.5 3-2.5 3 .5 4-3.7 1.6L21 27.6l-4-.5-3 2.5-3-2.5-4 .5-1.5-3.7L1.8 22.3l.5-4L-.2 15.3 2.3 12.3l-.5-4 3.7-1.6L7 3.5l4 .5z" transform="translate(0.6,-1) scale(0.96)"/><circle cx="14" cy="14" r="5"/></svg>
<svg class="a" style="left:373px;top:1791px" width="30" height="28" viewBox="0 0 30 28" fill="none" stroke="#111" stroke-width="1.9">
<path d="M12.7 10.5V5C12.7 2.5 11.5 1 9 1H1V23H10C11.5 23 12.7 22 12.7 20.5V15.2"/><path d="M12.7 5C12.7 2.5 14.5 1 17 1H25V10.4"/><path d="M14.9 12.9L27 25.1M27 12.9L14.9 25.1"/></svg>
<svg class="a" style="left:683px;top:1791px" width="29" height="26" viewBox="0 0 29 26" fill="none" stroke="#262626" stroke-width="2">
<path d="M1 25V1h27v4"/><path d="M1 6h27"/><path d="M4 11h4M4 15h3M4 19h3M4 23h5"/><circle cx="19" cy="17" r="8"/><circle cx="19" cy="17" r="3" fill="#262626"/></svg>
<svg class="a" style="left:745px;top:1788px" width="33" height="30" viewBox="0 0 33 30" fill="none" stroke="#262626" stroke-width="2">
<circle cx="13.7" cy="5.8" r="3.4"/><path d="M2.2 11.2C2.2 9.5 4 9 6 9.5C9 10.3 11 10.8 13.5 10.8C16.5 10.8 19 10 22 9.2C24 8.7 25.5 9.5 25 11"/>
<path d="M13.2 11C13 17 11.5 21 8 24C6 25.8 6.5 28 9 27.5"/><path d="M16.4 23L21 26.8L31 17.3"/></svg>
<svg class="a" style="left:2180px;top:1788px" width="28" height="29" viewBox="0 0 28 29" fill="none" stroke="#262626" stroke-width="2">
<path d="M1 7V1h5M22 1h5v6M1 22v6h5M22 28h5v-6"/><path d="M8 24V6h8l5 5v13z"/><path d="M16 6v5h5"/></svg>
<svg class="a" style="left:2310px;top:1789px" width="28" height="26" viewBox="0 0 28 26" fill="none" stroke="#262626" stroke-width="2">
<path d="M14 4C10 1 5 1 1 2v21c4-1 9-1 13 2 4-3 9-3 13-2V2c-4-1-9-1-13 2z"/><path d="M14 4v21M5 8h5M5 13h5M5 18h5M18 8h5M18 13h5M18 18h5"/></svg>
<div class="a" style="left:2365px;top:1782px;width:80px;height:42px;background:#dcdcdc"></div>
<svg class="a" style="left:2392px;top:1789px" width="24" height="28" viewBox="0 0 24 28" fill="none" stroke="#262626" stroke-width="2">
<rect x="1" y="1" width="22" height="26"/><path d="M5 6h14M5 10h14M5 14h14M5 18h14M5 22h14"/></svg>
<svg class="a" style="left:2470px;top:1789px" width="30" height="28" viewBox="0 0 30 28" fill="none" stroke="#262626" stroke-width="2">
<path d="M14 26H1V1h25v9"/><path d="M1 6h25"/><path d="M5 11h4M5 15h3M5 19h3M5 23h5"/><circle cx="21" cy="19" r="8"/><path d="M13 19h16M21 11c-3 3-3 13 0 16M21 11c3 3 3 13 0 16"/></svg>
<div class="a" style="left:2537px;top:1802px;width:15px;height:2px;background:#555"></div>
<div class="a" style="left:2564px;top:1802px;width:198px;height:2px;background:#666"></div>
<div class="a" style="left:2662px;top:1797px;width:2px;height:11px;background:#666"></div>
<div class="a" style="left:2616px;top:1792px;width:10px;height:22px;background:#555"></div>
<svg class="a" style="left:2772px;top:1795px" width="16" height="16" viewBox="0 0 16 16" stroke="#555" stroke-width="2"><path d="M8 0v16M0 8h16"/></svg>
</body></html>
